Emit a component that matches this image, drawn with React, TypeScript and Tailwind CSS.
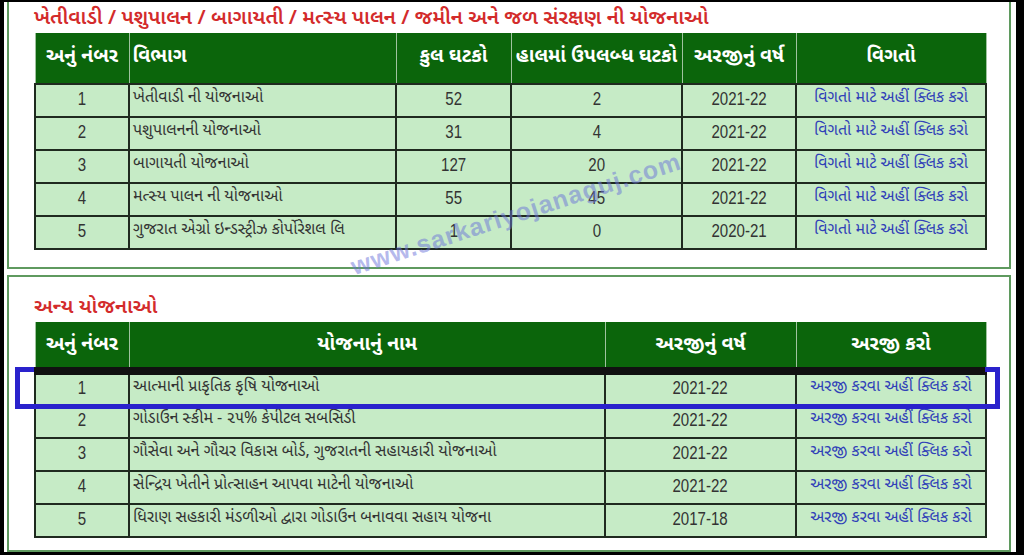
import React from "react";

const guj = { fontFamily: '"Noto Sans Gujarati", "Lohit Gujarati", "Noto Sans", "Liberation Sans", sans-serif' };
const num = { fontFamily: '"Liberation Sans", Arial, sans-serif' };

const t1 = [
  ["1", "ખેતીવાડી ની યોજનાઓ", "52", "2", "2021-22"],
  ["2", "પશુપાલનની યોજનાઓ", "31", "4", "2021-22"],
  ["3", "બાગાયતી યોજનાઓ", "127", "20", "2021-22"],
  ["4", "મત્સ્ય પાલન ની યોજનાઓ", "55", "45", "2021-22"],
  ["5", "ગુજરાત એગ્રો ઇન્ડસ્ટ્રીઝ કોર્પોરેશલ લિ", "1", "0", "2020-21"],
];

const t2 = [
  ["1", "આત્માની પ્રાકૃતિક કૃષિ યોજનાઓ", "2021-22"],
  ["2", "ગોડાઉન સ્કીમ - ૨૫% કેપીટલ સબસિડી", "2021-22"],
  ["3", "ગૌસેવા અને ગૌચર વિકાસ બોર્ડ, ગુજરાતની સહાયકારી યોજનાઓ", "2021-22"],
  ["4", "સેન્દ્રિય ખેતીને પ્રોત્સાહન આપવા માટેની યોજનાઓ", "2021-22"],
  ["5", "ધિરાણ સહકારી મંડળીઓ દ્વારા ગોડાઉન બનાવવા સહાય યોજના", "2017-18"],
];

const th = "text-white font-bold text-[19.5px] border-x border-[#9fc39f] bg-[#0b650b] whitespace-nowrap";
const th2 = th + " border-b-[5px] border-b-[#111]";
const tdBase = "border-2 border-[#1f2a1f] h-[33px] pt-0 pb-[3px] px-0";
const td = tdBase + " text-[16px] text-[#333]";
const tdLink = tdBase + " text-[16px] text-[#3040b8] text-center whitespace-nowrap";

function Num({ v }: { v: string }) {
  return (
    <span className="inline-block scale-x-[0.86] text-[17.5px] text-[#333]" style={num}>
      {v}
    </span>
  );
}

export default function App() {
  return (
    <div className="relative w-[1024px] h-[555px] bg-black pt-[2px] pl-[4px] pr-[8px] pb-[3px] overflow-hidden">
      <div className="bg-white h-full pl-[3px] pr-[5px] flex flex-col gap-[6px]">
        {/* Panel 1 */}
        <div className="border-2 border-t-0 border-[#5f9a5f] pl-[25px] pr-[24px] pb-[17px]">
          <div className="h-[31px] pt-[4px] leading-[27px] text-[20.5px] text-[#d32b2b] font-semibold whitespace-nowrap" style={guj}>
            ખેતીવાડી / પશુપાલન / બાગાયતી / મત્સ્ય પાલન / જમીન અને જળ સંરક્ષણ ની યોજનાઓ
          </div>
          <table className="w-[951px] table-fixed border-collapse">
            <colgroup>
              <col className="w-[94px]" />
              <col className="w-[267px]" />
              <col className="w-[115px]" />
              <col className="w-[171px]" />
              <col className="w-[114px]" />
              <col className="w-[190px]" />
            </colgroup>
            <thead>
              <tr className="h-[51px]" style={guj}>
                <th className={th + " text-center"}>અનું નંબર</th>
                <th className={th + " text-left pl-[3px]"}>વિભાગ</th>
                <th className={th + " text-center"}>કુલ ઘટકો</th>
                <th className={th + " text-center"}>હાલમાં ઉપલબ્ધ ઘટકો</th>
                <th className={th + " text-center"}>અરજીનું વર્ષ</th>
                <th className={th + " text-center"}>વિગતો</th>
              </tr>
            </thead>
            <tbody className="bg-[#c6ebc6]">
              {t1.map((r) => (
                <tr key={r[0]}>
                  <td className={td + " text-center"}><Num v={r[0]} /></td>
                  <td className={td + " pl-[3px] whitespace-nowrap"} style={guj}>{r[1]}</td>
                  <td className={td + " text-center"}><Num v={r[2]} /></td>
                  <td className={td + " text-center"}><Num v={r[3]} /></td>
                  <td className={td + " text-center"}><Num v={r[4]} /></td>
                  <td className={tdLink} style={guj}>વિગતો માટે અહીં ક્લિક કરો</td>
                </tr>
              ))}
            </tbody>
          </table>
        </div>

        {/* Panel 2 */}
        <div className="flex-1 border-2 border-[#5f9a5f] pl-[25px] pr-[24px] pt-[18px]">
          <div className="h-[27px] leading-[27px] text-[20.5px] text-[#d32b2b] font-semibold" style={guj}>
            અન્ય યોજનાઓ
          </div>
          <table className="w-[951px] table-fixed border-collapse">
            <colgroup>
              <col className="w-[94px]" />
              <col className="w-[476px]" />
              <col className="w-[191px]" />
              <col className="w-[190px]" />
            </colgroup>
            <thead>
              <tr className="h-[50px]" style={guj}>
                <th className={th2 + " text-center"}>અનું નંબર</th>
                <th className={th2 + " text-center"}>યોજનાનું નામ</th>
                <th className={th2 + " text-center"}>અરજીનું વર્ષ</th>
                <th className={th2 + " text-center"}>અરજી કરો</th>
              </tr>
            </thead>
            <tbody className="bg-[#c6ebc6]">
              {t2.map((r) => (
                <tr key={r[0]}>
                  <td className={td + " text-center"}><Num v={r[0]} /></td>
                  <td className={td + " pl-[3px] whitespace-nowrap"} style={guj}>{r[1]}</td>
                  <td className={td + " text-center"}><Num v={r[2]} /></td>
                  <td className={tdLink} style={guj}>અરજી કરવા અહીં ક્લિક કરો</td>
                </tr>
              ))}
            </tbody>
          </table>
        </div>
      </div>

      {/* Blue highlight box */}
      <div className="absolute left-[15px] top-[367px] w-[985px] h-[42px] border-[5px] border-[#2a22cc] z-10" />
      <div className="absolute left-[34px] top-[367px] w-[951px] h-[5px] bg-[#111] z-20" />

      {/* Watermark */}
      <div
        className="absolute left-[516px] top-[214px] -translate-x-1/2 -translate-y-1/2 -rotate-[18deg] whitespace-nowrap text-[25px] font-bold tracking-[1px] text-[#6b73d9]/50 z-30"
        style={{ fontFamily: '"Liberation Sans", Arial, sans-serif' }}
      >
        www.sarkariyojanaguj.com
      </div>
    </div>
  );
}
